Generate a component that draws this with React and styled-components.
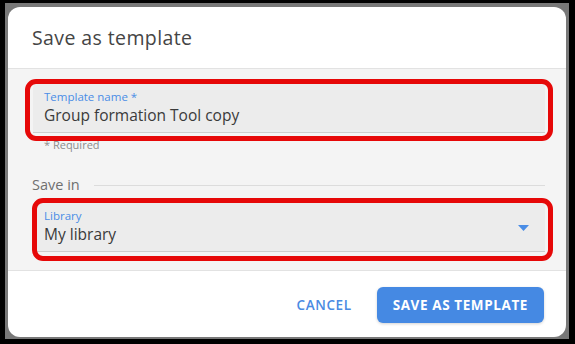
import styled, { createGlobalStyle } from 'styled-components';

const GlobalStyle = createGlobalStyle`
	html, body {
		margin: 0;
		padding: 0;
		background: #000;
	}
	* {
		box-sizing: border-box;
	}
`;

const Frame = styled.div`
	width: 575px;
	height: 344px;
	background: #000;
	padding: 3px 6px 5px 5px;
	font-family: 'Open Sans', 'Liberation Sans', sans-serif;
`;

const Backdrop = styled.div`
	height: 100%;
	background: #787878;
	padding: 4px 3px 2px 3px;
`;

const Dialog = styled.div`
	height: 100%;
	background: #fff;
	border-radius: 12px;
	overflow: hidden;
	display: flex;
	flex-direction: column;
`;

const Header = styled.div`
	height: 62px;
	padding: 0 24px;
	display: flex;
	align-items: center;
	border-bottom: 1px solid #e2e2e2;
`;

const Title = styled.h2`
	margin: 0;
	font-size: 19.5px;
	font-weight: 400;
	color: #454545;
	padding-bottom: 1px;
	letter-spacing: 0.4px;
`;

const Body = styled.div`
	background: #f4f4f4;
	padding: 15px 21px 18px 25px;
	border-bottom: 1px solid #e2e2e2;
	display: flex;
	flex-direction: column;
`;

const Annotated = styled.div`
	position: relative;
	&::after {
		content: '';
		position: absolute;
		top: ${(p) => p.$top}px;
		left: ${(p) => p.$left}px;
		right: ${(p) => p.$right}px;
		bottom: ${(p) => p.$bottom}px;
		border: 5px solid #e60808;
		border-radius: 11px;
		pointer-events: none;
	}
`;

const Field = styled.div`
	position: relative;
	height: 49px;
	background: #ececec;
	border-radius: 4px 4px 0 0;
	border-bottom: 1px solid #cdcdcd;
	padding: 5px 11px 0;
	display: flex;
	flex-direction: column;
`;

const Label = styled.span`
	font-size: 11.5px;
	line-height: 15px;
	color: #4a8de6;
`;

const Value = styled.span`
	font-size: 15.5px;
	line-height: 22px;
	color: #3a3a3a;
`;

const Caret = styled.svg`
	position: absolute;
	right: 16px;
	top: 22px;
`;

const Helper = styled.div`
	font-size: 11px;
	color: #8c8c8c;
	padding: 4px 0 0 11px;
	height: 42px;
`;

const SectionRow = styled.div`
	display: flex;
	align-items: center;
	gap: 14px;
	margin-bottom: 9px;
	margin-left: -1px;
`;

const SectionTitle = styled.span`
	font-size: 14.5px;
	color: #707070;
`;

const Rule = styled.div`
	flex: 1;
	height: 1px;
	background: #dcdcdc;
	margin-top: 2px;
`;

const Footer = styled.div`
	flex: 1;
	display: flex;
	justify-content: flex-end;
	align-items: flex-start;
	padding: 16px 22px 0;
	gap: 9px;
`;

const Button = styled.button`
	height: 36px;
	border: none;
	border-radius: 6px;
	padding: 0 16px;
	font-family: 'Open Sans', 'Liberation Sans', sans-serif;
	font-size: 13.5px;
	font-weight: ${(p) => (p.$primary ? 700 : 600)};
	letter-spacing: 0.6px;
	text-transform: uppercase;
	background: ${(p) => (p.$primary ? '#4589e3' : 'transparent')};
	color: ${(p) => (p.$primary ? '#fff' : '#4a8ae2')};
	box-shadow: ${(p) => (p.$primary ? '0 1px 3px rgba(0,0,0,0.18)' : 'none')};
	cursor: pointer;
`;

const App = () => {
	return (
		<>
			<GlobalStyle />
			<Frame>
				<Backdrop>
					<Dialog>
						<Header>
							<Title>Save as template</Title>
						</Header>
						<Body>
							<Annotated $top={-5} $left={-8} $right={-8} $bottom={-8}>
								<Field>
									<Label>Template name *</Label>
									<Value>Group formation Tool copy</Value>
								</Field>
							</Annotated>
							<Helper>* Required</Helper>
							<SectionRow>
								<SectionTitle>Save in</SectionTitle>
								<Rule />
							</SectionRow>
							<Annotated $top={-5} $left={-1} $right={-8} $bottom={-9}>
								<Field>
									<Label>Library</Label>
									<Value>My library</Value>
									<Caret width='11' height='6' viewBox='0 0 11 6'>
										<path d='M0 0 L11 0 L5.5 6 Z' fill='#4a8de6' />
									</Caret>
								</Field>
							</Annotated>
						</Body>
						<Footer>
							<Button>Cancel</Button>
							<Button $primary>Save as template</Button>
						</Footer>
					</Dialog>
				</Backdrop>
			</Frame>
		</>
	);
};

export default App;
